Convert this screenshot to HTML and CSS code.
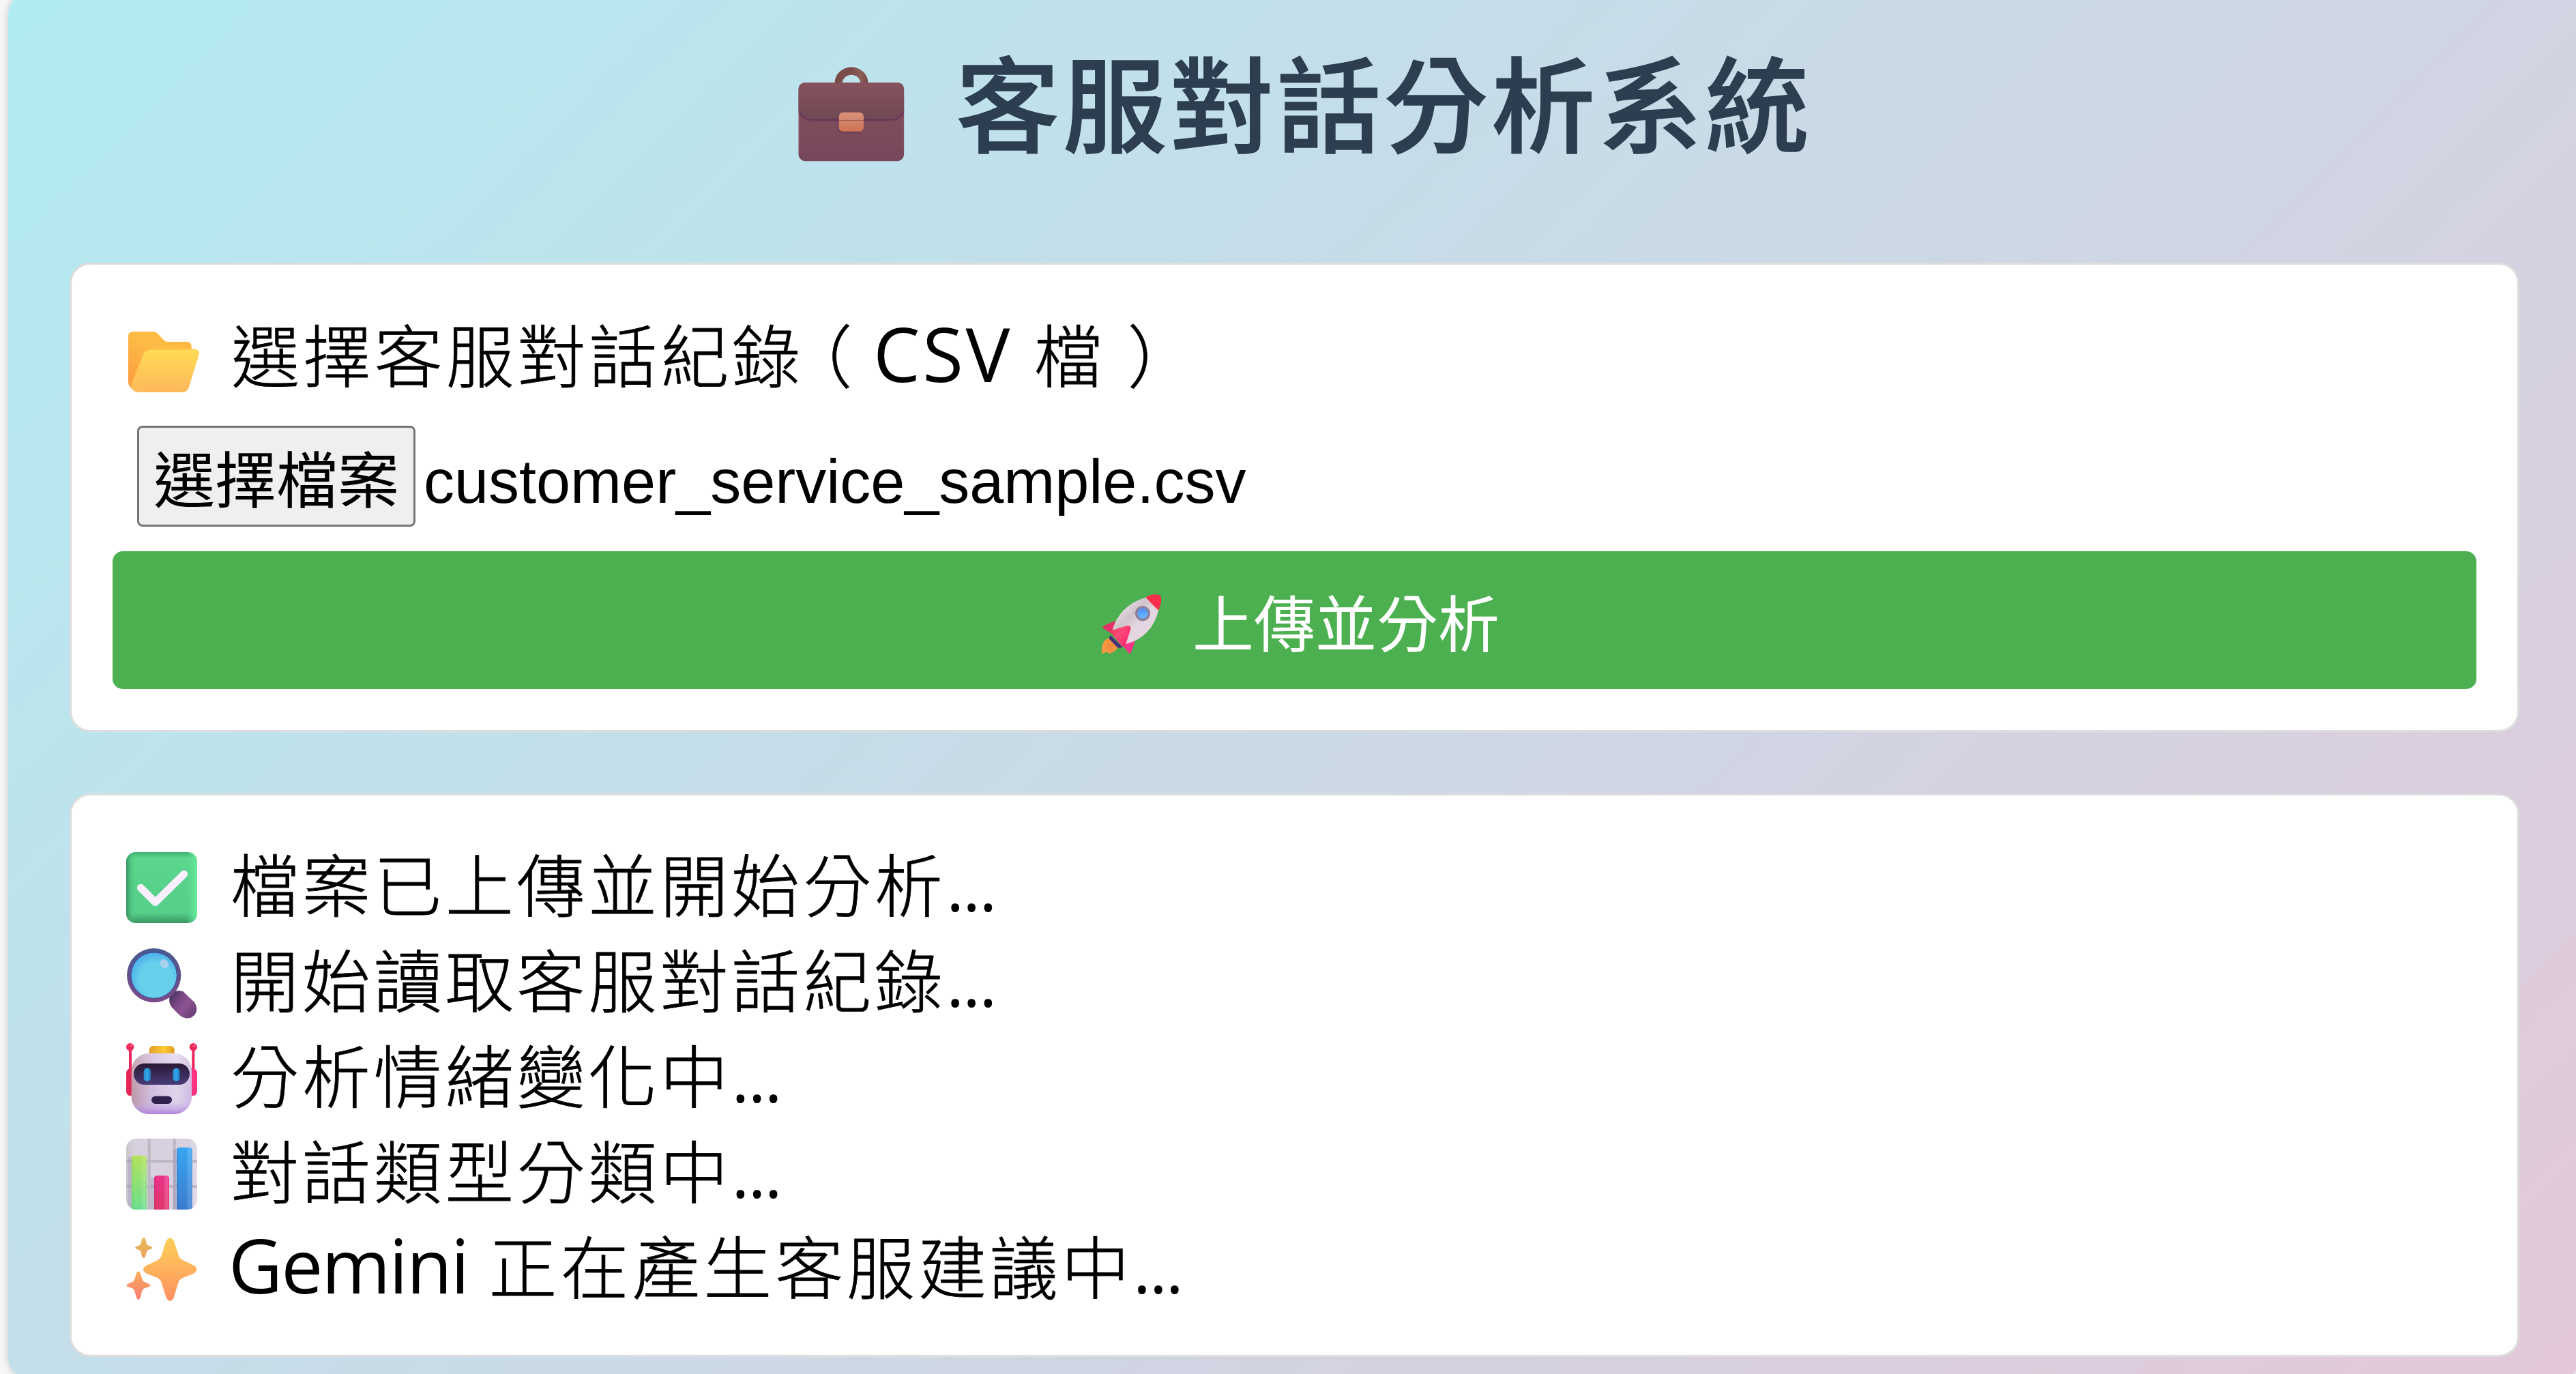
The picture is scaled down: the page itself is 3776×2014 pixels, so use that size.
FILE: index.html
```html
<!DOCTYPE html>
<html lang="zh-Hant">
<head>
<meta charset="utf-8">
<title>客服對話分析系統</title>
<link rel="stylesheet" href="styles.css">
</head>
<body>
<main class="container">
  <h1 class="title">
    <svg class="title-icon" viewBox="60 54 468 418">
      <defs>
        <linearGradient id="bagBody" x1="0" y1="0" x2="0" y2="1"><stop offset="0" stop-color="#84525c"/><stop offset="1" stop-color="#77465b"/></linearGradient>
        <linearGradient id="bagFlap" x1="0" y1="0" x2="0" y2="1"><stop offset="0" stop-color="#86525c"/><stop offset="1" stop-color="#704855"/></linearGradient>
        <linearGradient id="bagLock" x1="0" y1="0" x2="0" y2="1"><stop offset="0" stop-color="#de9274"/><stop offset=".38" stop-color="#d08872"/><stop offset="1" stop-color="#d2724f"/></linearGradient>
        <linearGradient id="bagHandle" x1="0" y1="0" x2="1" y2="0"><stop offset="0" stop-color="#7a4c46"/><stop offset=".45" stop-color="#7a4b49"/><stop offset=".8" stop-color="#8a5f57"/><stop offset="1" stop-color="#764642"/></linearGradient>
        <filter id="soft" x="-20%" y="-20%" width="140%" height="140%"><feGaussianBlur stdDeviation="4"/></filter>
      </defs>
      <path d="M220 126a74 71 0 0 1 148 0h-34a40 37 0 0 0-80 0z" fill="url(#bagHandle)"/>
      <rect x="61" y="123" width="465" height="347" rx="32" fill="url(#bagBody)"/>
      <path d="M65 420V260M522 420V260" stroke="#8f5b66" stroke-width="5" opacity=".6"/>
      <path d="M64 245q18 43 56 43h346q40 0 58-43" fill="none" stroke="#66295a" stroke-width="6" filter="url(#soft)"/>
      <path d="M61 155q0-32 32-32h401q32 0 32 32v92q-14 41-60 41H122q-46 0-61-41z" fill="url(#bagFlap)"/>
      <path d="M66 254q16 33 56 33h344q40 0 57-33" fill="none" stroke="#652c55" stroke-width="4" opacity=".85"/>
      <rect x="236" y="258" width="110" height="86" rx="18" fill="#5f2c55" opacity=".6" filter="url(#soft)"/>
      <rect x="239" y="255" width="109" height="84" rx="17" fill="url(#bagLock)"/>
      <path d="M239 290h109" stroke="#a85843" stroke-width="3"/>
    </svg>
    <span>客服對話分析系統</span>
  </h1>

  <section class="card upload">
    <label class="row">
      <svg class="icon" viewBox="54 28 312 312">
        <defs>
          <linearGradient id="folderBack" x1="1" y1="0" x2=".2" y2="1"><stop offset="0" stop-color="#ffb63d"/><stop offset=".45" stop-color="#fdbd47"/><stop offset="1" stop-color="#fd9c40"/></linearGradient>
          <linearGradient id="folderFront" x1="0" y1="0" x2="0" y2="1"><stop offset="0" stop-color="#ffdc53"/><stop offset="1" stop-color="#ffb85d"/></linearGradient>
        </defs>
        <path d="M54 70q0-20 20-20h90q12 0 20 8l27 29q7 7 16 7h85q20 0 20 20v50L100 314Q54 300 54 270z" fill="url(#folderBack)"/>
        <path d="M157 126h191q22 3 17 25l-45 145q-6 20-27 20H96q-22-3-32-23l55-143q10-24 38-24z" fill="url(#folderFront)"/>
        <path d="M66 290l54-140q9-22 37-22h190" fill="none" stroke="#ffc44c" stroke-width="4"/>
      </svg>
      <span class="text">選擇客服對話紀錄<span class="paren-open">（</span><span class="latin file-type">CSV </span>檔<span class="paren-close">）</span></span>
    </label>
    <div class="file">
      <button class="file-button" type="button">選擇檔案</button>
      <span class="file-name">customer_service_sample.csv</span>
    </div>
    <button class="submit" type="button">
      <svg class="submit-icon" viewBox="46 34 270 266">
        <defs>
          <linearGradient id="hull" x1="0" y1="0" x2="1" y2="1"><stop offset=".1" stop-color="#f3edf0"/><stop offset=".4" stop-color="#cfc1cb"/><stop offset=".55" stop-color="#e3d6df"/><stop offset="1" stop-color="#e9d5ef"/></linearGradient>
          <linearGradient id="fin" x1="0" y1="0" x2="1" y2=".6"><stop offset="0" stop-color="#ec3551"/><stop offset=".5" stop-color="#ff4a78"/><stop offset="1" stop-color="#fb2b70"/></linearGradient>
          <radialGradient id="flame"><stop offset="0" stop-color="#ea883d"/><stop offset="1" stop-color="#ff9a42"/></radialGradient>
          <linearGradient id="pane" x1="0" y1="0" x2="0" y2="1"><stop offset="0" stop-color="#4f8ffb"/><stop offset="1" stop-color="#69b9ff"/></linearGradient>
        </defs>
        <path d="M80 230q-34 10-31 64 7 6 14-1 8-6 12-1 2 7 8 5 36-10 38-36z" fill="url(#flame)"/>
        <path d="M112 154q-28 7-53 21-10 6-1 13l34 22z" fill="#e82f66"/>
        <path d="M196 235q-6 32-19 58-5 7-12 0l-27-36z" fill="#fa3486"/>
        <path d="M94 200Q125 85 244 50l55 57q-30 118-142 148z" fill="url(#hull)"/>
        <path d="M243 50q36-20 63-8 12 20-8 65-30-26-55-57z" fill="#f82f4b"/>
        <path d="M88 217l52 52q-12 8-24 0L82 234q-3-10 6-17z" fill="#48317b"/>
        <path d="M88 205q-9-3 0-8l70-22q22-4 18 17l-23 68q-5 13-14 6z" fill="url(#fin)"/>
        <circle cx="229" cy="121" r="33" fill="#8d7f9b"/>
        <circle cx="229" cy="121" r="23" fill="url(#pane)"/>
      </svg>
      <span>上傳並分析</span>
    </button>
  </section>

  <section class="card log">
    <div class="row">
      <svg class="icon" viewBox="45 60 312 312">
        <defs>
          <linearGradient id="tickH" x1="0" y1="0" x2="1" y2="0"><stop offset="0" stop-color="#2f8458" stop-opacity=".85"/><stop offset=".13" stop-color="#57d38b" stop-opacity="0"/><stop offset=".85" stop-color="#5fdf92" stop-opacity="0"/><stop offset="1" stop-color="#68eb9a"/></linearGradient>
          <linearGradient id="tickV" x1="0" y1="0" x2="0" y2="1"><stop offset="0" stop-color="#41ae70"/><stop offset=".08" stop-color="#5ad68d"/><stop offset=".86" stop-color="#55cf89"/><stop offset="1" stop-color="#3b9564"/></linearGradient>
        </defs>
        <rect x="45" y="60" width="312" height="312" rx="42" fill="url(#tickV)"/>
        <rect x="45" y="60" width="312" height="312" rx="42" fill="url(#tickH)"/>
        <path d="M109 217l64 64L299 157" fill="none" stroke="#faeffd" stroke-width="33" stroke-linecap="round" stroke-linejoin="round"/>
      </svg>
      <span class="text">檔案已上傳並開始分析<span class="dots">...</span></span>
    </div>
    <div class="row">
      <svg class="icon" viewBox="45 480 312 312">
        <defs>
          <linearGradient id="rim" x1="0" y1="0" x2="0" y2="1"><stop offset="0" stop-color="#475a92"/><stop offset="1" stop-color="#7b4a89"/></linearGradient>
          <radialGradient id="glass" cx=".55" cy=".6" r=".62"><stop offset=".6" stop-color="#66cfea"/><stop offset="1" stop-color="#4aaced"/></radialGradient>
          <linearGradient id="grip" x1=".1" y1=".2" x2=".9" y2=".8"><stop offset="0" stop-color="#533866"/><stop offset=".3" stop-color="#7a4685"/><stop offset=".6" stop-color="#8c5392"/><stop offset="1" stop-color="#6d4079"/></linearGradient>
        </defs>
        <path d="M238 685q24-22 57-12l50 47q16 24 6 48-15 26-45 22-17-3-29-15l-32-33q-17-22-7-57z" fill="url(#grip)"/>
        <circle cx="167" cy="602" r="119" fill="url(#rim)"/>
        <circle cx="167" cy="602" r="101" fill="url(#glass)" stroke="#3d4d94" stroke-width="3"/>
        <path d="M193 545q6-15 19-14 20 8 20 27-4 12-18 13-20-5-21-26z" fill="#a9d2f0"/>
      </svg>
      <span class="text">開始讀取客服對話紀錄<span class="dots">...</span></span>
    </div>
    <div class="row">
      <svg class="icon" viewBox="45 60 312 312">
        <defs>
          <linearGradient id="face" x1="0" y1="0" x2="1" y2="0"><stop offset="0" stop-color="#ba929e"/><stop offset=".35" stop-color="#d2bedf"/><stop offset=".75" stop-color="#e1d8ea"/><stop offset="1" stop-color="#cdb9e2"/></linearGradient>
          <linearGradient id="chin" x1="0" y1="0" x2="0" y2="1"><stop offset="0" stop-color="#fff" stop-opacity=".2"/><stop offset=".8" stop-color="#c9b2e5" stop-opacity=".15"/><stop offset="1" stop-color="#b183dc"/></linearGradient>
          <linearGradient id="visor" x1="0" y1="0" x2="0" y2="1"><stop offset="0" stop-color="#2b1833"/><stop offset="1" stop-color="#473c77"/></linearGradient>
          <linearGradient id="eye" x1="0" y1="0" x2="1" y2="0"><stop offset="0" stop-color="#1f8fd0"/><stop offset=".5" stop-color="#35a4ec"/><stop offset="1" stop-color="#1779ba"/></linearGradient>
          <linearGradient id="cap" x1="0" y1="0" x2="1" y2="0"><stop offset="0" stop-color="#e0a02c"/><stop offset=".6" stop-color="#fdca35"/><stop offset="1" stop-color="#dc9c20"/></linearGradient>
        </defs>
        <path d="M63 85v95M340 85v95" stroke="#ef2560" stroke-width="12"/>
        <circle cx="62" cy="77" r="17" fill="#ed2a58"/><circle cx="340" cy="77" r="17" fill="#ed2a58"/>
        <circle cx="67" cy="72" r="6" fill="#ff5a80"/><circle cx="345" cy="72" r="6" fill="#ff5a80"/>
        <rect x="45" y="171" width="48" height="121" rx="20" fill="#e42455"/>
        <rect x="309" y="171" width="48" height="121" rx="20" fill="#fb3183"/>
        <rect x="146" y="72" width="111" height="48" rx="18" fill="url(#cap)"/>
        <rect x="68" y="105" width="265" height="267" rx="76" fill="url(#face)"/>
        <rect x="68" y="105" width="265" height="267" rx="76" fill="url(#chin)"/>
        <rect x="78" y="149" width="246" height="94" rx="47" fill="url(#visor)"/>
        <rect x="122" y="170" width="31" height="58" rx="15" fill="url(#eye)"/>
        <rect x="250" y="170" width="31" height="58" rx="15" fill="url(#eye)"/>
        <rect x="156" y="293" width="90" height="34" rx="17" fill="#30204e"/>
      </svg>
      <span class="text">分析情緒變化中<span class="dots">...</span></span>
    </div>
    <div class="row">
      <svg class="icon" viewBox="45 480 312 312">
        <defs>
          <clipPath id="panel"><rect x="45" y="480" width="312" height="312" rx="44"/></clipPath>
          <linearGradient id="paper" x1="0" y1="0" x2="1" y2="0"><stop offset="0" stop-color="#c9c6cd"/><stop offset=".12" stop-color="#d7d1df"/><stop offset=".9" stop-color="#d8d1e0"/><stop offset="1" stop-color="#e3dbea"/></linearGradient>
          <linearGradient id="barG" x1="0" y1="0" x2="0" y2="1"><stop offset="0" stop-color="#b2e35f"/><stop offset="1" stop-color="#67dd90"/></linearGradient>
          <linearGradient id="barR" x1="0" y1="0" x2="0" y2="1"><stop offset="0" stop-color="#ea328a"/><stop offset="1" stop-color="#df3767"/></linearGradient>
          <linearGradient id="barB" x1="0" y1="0" x2="0" y2="1"><stop offset="0" stop-color="#37a5f2"/><stop offset="1" stop-color="#3b78cc"/></linearGradient>
          <linearGradient id="barShade" x1="0" y1="0" x2="1" y2="0"><stop offset="0" stop-color="#000" stop-opacity=".1"/><stop offset=".15" stop-color="#000" stop-opacity="0"/><stop offset=".6" stop-color="#fff" stop-opacity="0"/><stop offset=".85" stop-color="#fff" stop-opacity=".2"/><stop offset="1" stop-color="#fff" stop-opacity="0"/></linearGradient>
        </defs>
        <g clip-path="url(#panel)">
          <path d="M45 480h312v312H45z" fill="url(#paper)"/>
          <path d="M45 579h312M45 690h312M146 480v312M257 480v312" stroke="#bcb8c2" stroke-width="12"/>
          <path d="M60 560v232M160 650v142M259 525v267" stroke="#8f7da8" stroke-width="14" opacity=".3"/>
          <path d="M68 810V567q0-13 13-13h41q13 0 13 13v243z" fill="url(#barG)"/>
          <path d="M168 810V656q0-13 13-13h40q13 0 13 13v154z" fill="url(#barR)"/>
          <path d="M267 810V532q0-13 13-13h42q13 0 13 13v278z" fill="url(#barB)"/>
          <path d="M68 810V567q0-13 13-13h41q13 0 13 13v243z" fill="url(#barShade)"/>
          <path d="M168 810V656q0-13 13-13h40q13 0 13 13v154z" fill="url(#barShade)"/>
          <path d="M267 810V532q0-13 13-13h42q13 0 13 13v278z" fill="url(#barShade)"/>
        </g>
      </svg>
      <span class="text">對話類型分類中<span class="dots">...</span></span>
    </div>
    <div class="row">
      <svg class="icon" viewBox="45 900 312 312">
        <defs>
          <linearGradient id="starBig" x1="0" y1="0" x2="0" y2="1"><stop offset="0" stop-color="#fcce55"/><stop offset=".5" stop-color="#ffb25d"/><stop offset="1" stop-color="#fd8d62"/></linearGradient>
          <linearGradient id="starTop" x1="0" y1="0" x2="0" y2="1"><stop offset="0" stop-color="#e6bd56"/><stop offset="1" stop-color="#ee9f5c"/></linearGradient>
          <linearGradient id="starLow" x1="0" y1="0" x2="0" y2="1"><stop offset="0" stop-color="#f7ae5c"/><stop offset="1" stop-color="#fb7d72"/></linearGradient>
        </defs>
        <path d="M219 934q7-17 19-17t18 17l19 58q5 16 20 23l47 22q13 7 13 18t-13 18l-47 19q-15 5-20 19l-20 66q-6 17-17 17t-18-17l-20-64q-5-15-19-22l-46-18q-15-7-15-18t15-18l45-21q15-6 20-22z" fill="url(#starBig)"/>
        <path d="M115 921q7-13 14 0l6 21q2 6 8 8l12 5q9 5 0 10l-12 4q-6 3-8 8l-6 22q-7 13-14 0l-6-22q-2-5-8-8l-12-4q-9-5 0-10l12-5q6-3 8-8z" fill="url(#starTop)"/>
        <path d="M90 1071q9-15 17 0l8 27q3 9 11 12l18 8q14 7 0 14l-18 6q-8 3-11 12l-8 30q-9 15-17 0l-8-30q-3-9-11-12l-18-6q-13-7 0-14l18-8q8-3 11-12z" fill="url(#starLow)"/>
      </svg>
      <span class="text"><span class="latin product">Gemini </span>正在產生客服建議中<span class="dots">...</span></span>
    </div>
  </section>
</main>
</body>
</html>
```
FILE: styles.css
```css
* {
  box-sizing: border-box;
}

body {
  margin: 0;
  height: 2014px;
  overflow: hidden;
  background: #f7f7f7;
  color: #000;
  font-family: "Open Sans", "Noto Sans CJK TC", sans-serif;
}

.container {
  width: 3771px;
  height: 2030px;
  margin: -10px 0 0 12px;
  padding: 0 90px;
  border-radius: 30px;
  background: linear-gradient(135deg, #b2ebf2, #e3c8da);
  box-shadow: 0 0 12px rgba(0, 0, 0, 0.2);
  display: flex;
  flex-direction: column;
}

.title {
  height: 395px;
  margin: 0;
  padding: 84px 0 0 32px;
  display: flex;
  justify-content: center;
  align-items: flex-start;
  gap: 75px;
  color: #2c3e50;
  font-size: 152px;
  font-weight: 500;
  letter-spacing: 5px;
  line-height: 160px;
  -webkit-text-stroke: 1.5px #2c3e50;
}

.title-icon {
  width: 156px;
  height: 139px;
  margin-top: 24px;
}

.card {
  width: 3591px;
  padding: 60px;
  border: 3px solid #ddd;
  border-radius: 30px;
  background: #fff;
}

.upload {
  height: 688px;
  margin-bottom: 90px;
  padding-top: 73px;
}

.log {
  height: 826px;
  padding-top: 65px;
}

.row {
  height: 140px;
  padding-left: 20px;
  display: flex;
  align-items: center;
  white-space: pre;
}

.upload .row {
  padding-left: 23px;
}

.icon {
  width: 104px;
  height: 104px;
  flex: none;
}

.text {
  margin-left: 49px;
  padding-bottom: 17px;
  font-family: "Noto Sans CJK TC", sans-serif;
  font-size: 100px;
  font-weight: 300;
  letter-spacing: 4.9px;
  line-height: 140px;
  -webkit-text-stroke: 0.8px #000;
}

.upload .text {
  margin-left: 47px;
  padding-bottom: 29px;
}

.paren-open,
.paren-close {
  font-feature-settings: "halt";
}

.paren-open {
  margin: 0 26px 0 21px;
}

.paren-close {
  margin-left: 32px;
}

.latin,
.dots {
  font-family: "Open Sans", sans-serif;
  font-weight: 400;
  line-height: 1;
  -webkit-text-stroke: 0;
}

.latin {
  font-size: 109px;
}

.file-type {
  letter-spacing: 3.5px;
}

.product {
  margin: 0 4px 0 -3px;
  letter-spacing: -2px;
}

.dots {
  font-size: 100px;
  letter-spacing: -2.2px;
}

.file {
  height: 148px;
  margin: 23px 0 36px 36px;
  display: flex;
  align-items: center;
  gap: 12px;
}

.file-button {
  width: 408px;
  height: 148px;
  padding: 0;
  border: 3px solid #767676;
  border-radius: 8px;
  background: #efefef;
  color: #000;
  font: 400 90px/140px "Noto Sans CJK TC", sans-serif;
}

.file-name {
  padding-top: 16px;
  font: 90px/140px "Liberation Sans", Arial, sans-serif;
}

.submit {
  width: 100%;
  height: 202px;
  padding: 0 0 0 17px;
  border: 0;
  border-radius: 15px;
  background: #4caf50;
  color: #fff;
  display: flex;
  justify-content: center;
  align-items: center;
  gap: 44px;
  font: 400 90px/140px "Noto Sans CJK TC", sans-serif;
}

.submit-icon {
  width: 90px;
  height: 89px;
  margin-top: 10px;
}
```
